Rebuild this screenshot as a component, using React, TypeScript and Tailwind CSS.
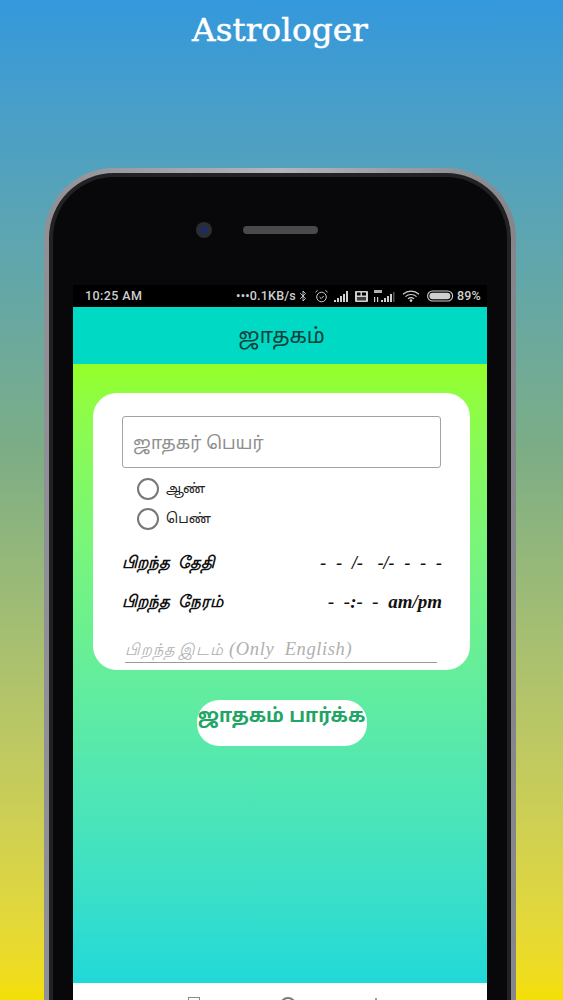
import { Bluetooth } from "lucide-react";

function Radio({ label }: { label: string }) {
  return (
    <div className="flex h-[30px] items-center gap-[7px]">
      <span className="h-[22px] w-[22px] rounded-full border-2 border-[#777777]" />
      <span className="text-[13.5px] leading-none text-[#222222]">{label}</span>
    </div>
  );
}

function StatusIcons() {
  return (
    <div className="flex items-center text-[#cfcfcf]">
      <span className="text-[12.5px] font-medium leading-none tracking-[0.2px] [font-family:Roboto,sans-serif]">•••0.1KB/s</span>
      <Bluetooth size={12} strokeWidth={1.8} className="ml-[1px]" />
      <svg width="15" height="14" viewBox="0 0 15 14" className="ml-[5px]" fill="none" stroke="currentColor" strokeWidth="1">
        <circle cx="7.5" cy="8" r="4.8" />
        <path d="M5.5 8l1.7 1.6L9.7 7M1.5 3.2L3.6 1.3M13.5 3.2L11.4 1.3" />
      </svg>
      <svg width="16" height="11" viewBox="0 0 16 11" className="ml-[5px]" fill="currentColor">
        <rect x="0" y="9" width="2" height="2" />
        <rect x="3" y="7" width="2" height="4" />
        <rect x="6" y="5" width="2" height="6" />
        <rect x="9" y="3" width="2" height="8" />
        <rect x="12" y="0" width="2" height="11" />
      </svg>
      <svg width="13" height="11" viewBox="0 0 13 11" className="ml-[5px]">
        <rect width="13" height="11" rx="1" fill="currentColor" />
        <rect x="2" y="1.5" width="3.5" height="3" fill="#000000" />
        <rect x="7" y="1.5" width="4" height="3" fill="#000000" />
        <rect x="2" y="6" width="9" height="3.5" fill="#000000" opacity="0.7" />
      </svg>
      <svg width="22" height="13" viewBox="0 0 22 13" className="ml-[6px]" fill="currentColor">
        <rect x="0" y="0" width="8" height="3" opacity="0.85" />
        <rect x="0" y="7" width="1.2" height="5" />
        <rect x="3" y="7" width="1.2" height="5" />
        <rect x="7" y="10" width="2" height="2" />
        <rect x="10" y="8" width="2" height="4" />
        <rect x="13" y="6" width="2" height="6" />
        <rect x="16" y="4" width="2" height="8" />
        <rect x="19" y="2" width="1.5" height="10" opacity="0.4" />
      </svg>
      <svg width="18" height="12" viewBox="0 0 18 12" className="ml-[6px]" fill="none" stroke="currentColor" strokeWidth="1.2">
        <path d="M1 4.2C5.6.2 12.4.2 17 4.2M3.4 6.6C6.6 3.8 11.4 3.8 14.6 6.6M5.9 8.9C7.7 7.4 10.3 7.4 12.1 8.9" />
        <circle cx="9" cy="10.6" r="0.8" fill="currentColor" />
      </svg>
      <svg width="27" height="12" viewBox="0 0 27 12" className="ml-[7px]" fill="none">
        <rect x="0.6" y="1" width="25" height="10" rx="5" stroke="currentColor" strokeWidth="1.1" />
        <rect x="2.4" y="2.7" width="21" height="6.6" rx="3.3" fill="currentColor" />
      </svg>
      <span className="ml-[3px] text-[12.5px] font-medium leading-none tracking-[0.2px] [font-family:Roboto,sans-serif]">89%</span>
    </div>
  );
}

export default function App() {
  return (
    <div
      className="flex h-[1000px] w-[563px] flex-col overflow-hidden bg-gradient-to-b from-[#3498dc] via-[#7cad85] via-[45%] to-[#f4df00]"
      style={{ fontFamily: '"Liberation Sans", "Noto Sans", "Noto Sans Tamil", sans-serif' }}
    >
      <h1 className="mt-[11px] h-[38px] pr-[3px] text-center text-[32.5px] font-normal leading-[38px] tracking-[0.2px] text-white [-webkit-text-stroke:0.5px_white] [font-family:'DejaVu_Serif',serif]">
        Astrologer
      </h1>

      <div className="ml-[44px] mt-[119px] w-[472px] shrink-0 rounded-t-[70px] bg-gradient-to-r from-[#8f9096] via-[#b5b5ba] to-[#85868b] p-[5px] pb-0">
        <div className="rounded-t-[65px] bg-[#222225] p-[4px] pb-0">
          <div className="rounded-t-[61px] bg-[#08080a] px-[20px] pb-0">
            <div className="flex h-[108px] items-start justify-center pr-[46px] pt-[45px]">
              <div className="flex h-[16px] w-[16px] items-center justify-center rounded-full bg-[#2b2d33]">
                <span className="h-[8px] w-[8px] rounded-full bg-[#1d2c5c]" />
              </div>
              <div className="ml-[31px] mt-[4px] h-[8px] w-[75px] rounded-full bg-[#4a4a4d]" />
            </div>

            <div className="w-[414px] bg-black">
              <div className="flex h-[22px] items-center justify-between pl-[12px] pr-[6px]">
                <span className="text-[12.5px] font-medium leading-none tracking-[0.4px] text-[#cfcfcf] [font-family:Roboto,sans-serif]">10:25 AM</span>
                <StatusIcons />
              </div>

              <div className="flex h-[57px] items-center justify-center bg-[#00d9c3] pb-[1px] pl-[3px]">
                <span className="text-[21px] leading-none text-[#11403c]">ஜாதகம்</span>
              </div>

              <div className="flex h-[619px] flex-col items-center bg-gradient-to-b from-[#94ff26] to-[#1fd9d8] pl-[3px] pt-[29px]">
                <div className="h-[277px] w-[377px] rounded-[24px] bg-white pl-[29px] pr-[28px] pt-[23px]">
                  <div className="flex h-[52px] w-[319px] items-center rounded-[3px] border-[1.5px] border-[#a3a3a3] pl-[10px] pt-[4px]">
                    <span className="text-[17.5px] leading-none text-[#8e8e8e]">ஜாதகர் பெயர்</span>
                  </div>

                  <div className="ml-[15px] mt-[6px]">
                    <Radio label="ஆண்" />
                    <Radio label="பெண்" />
                  </div>

                  <div className="mt-[19px] flex h-[20px] items-center justify-between font-bold italic text-[#111111] [font-family:'Liberation_Serif',serif]">
                    <span className="text-[16.5px] [word-spacing:4px]">பிறந்த தேதி</span>
                    <span className="whitespace-pre text-[18px] [word-spacing:0.4px]">-  -  /-   -/-  -  -  -</span>
                  </div>
                  <div className="mt-[19px] flex h-[20px] items-center justify-between font-bold italic text-[#111111] [font-family:'Liberation_Serif',serif]">
                    <span className="text-[16.5px] [word-spacing:4px]">பிறந்த நேரம்</span>
                    <span className="whitespace-pre text-[19px]">-  -:-  -  am/pm</span>
                  </div>

                  <div className="ml-[3px] mt-[26px] flex h-[25px] w-[312px] items-center border-b border-[#9a9a9a] italic text-[#b0b0b0] [font-family:'Liberation_Serif',serif]">
                    <span className="whitespace-pre text-[16px] tracking-[0.9px]">பிறந்த இடம் </span>
                    <span className="whitespace-pre text-[18.5px] tracking-[0.6px]">(Only  English)</span>
                  </div>
                </div>

                <div className="mt-[30px] flex h-[46px] w-[170px] items-start justify-center rounded-[22px] bg-white pt-[5px]">
                  <span className="whitespace-nowrap text-[19px] font-bold leading-[22px] text-[#1fa565]">ஜாதகம் பார்க்க</span>
                </div>
              </div>

              <div className="flex h-[17px] items-start justify-between bg-white pl-[115px] pr-[110px] pt-[14px]">
                <span className="h-[12px] w-[12px] border border-[#888888]" />
                <span className="h-[16px] w-[16px] rounded-full border-2 border-[#777777]" />
                <span className="mt-[1px] h-[8px] w-[2px] bg-[#999999]" />
              </div>
            </div>
          </div>
        </div>
      </div>
    </div>
  );
}
